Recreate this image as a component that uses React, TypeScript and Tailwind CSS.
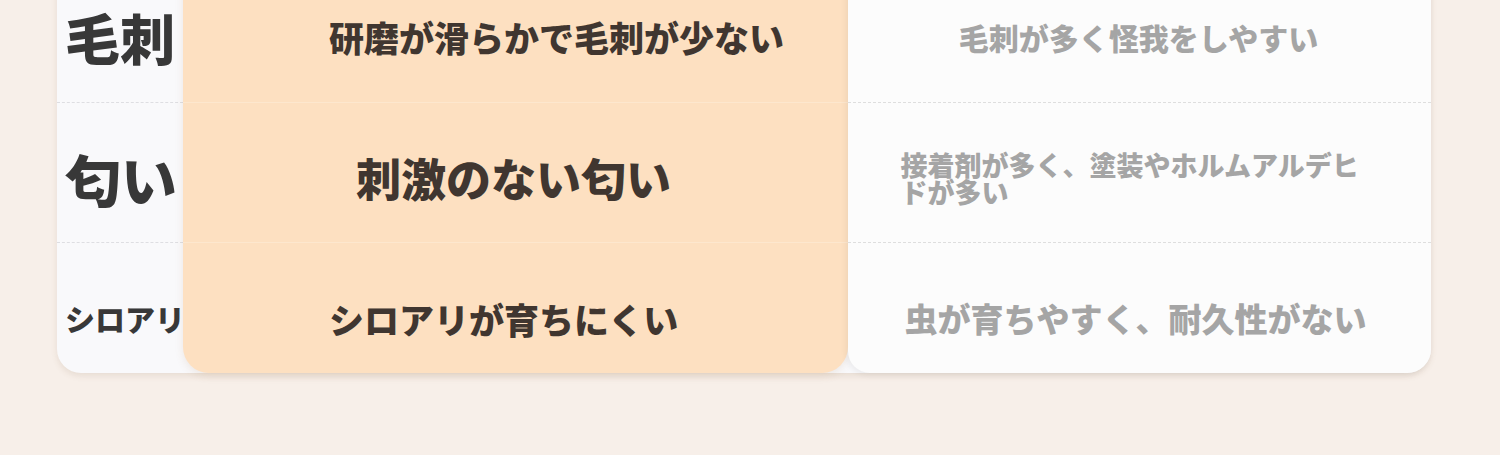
const FONT = { fontFamily: '"Noto Sans CJK JP", "Noto Sans", sans-serif' };

type Row = {
  label: string;
  labelSize: string;
  ours: string;
  oursClass: string;
  theirs: string;
  theirsClass: string;
  height: string;
  shift: string;
};

const ROWS: Row[] = [
  {
    label: "毛刺",
    labelSize: "text-[55px]",
    ours: "研磨が滑らかで毛刺が少ない",
    oursClass: "pl-[146px] text-[35px]",
    theirs: "毛刺が多く怪我をしやすい",
    theirsClass: "justify-center pr-[2px] text-[30px]",
    height: "h-[140px]",
    shift: "pt-[8px]",
  },
  {
    label: "匂い",
    labelSize: "text-[56px]",
    ours: "刺激のない匂い",
    oursClass: "pl-[173px] text-[45px]",
    theirs: "接着剤が多く、塗装やホルムアルデヒドが多い",
    theirsClass: "justify-center pr-[8px] text-[27px]",
    height: "h-[140px]",
    shift: "pt-[10px]",
  },
  {
    label: "シロアリ",
    labelSize: "text-[30px]",
    ours: "シロアリが育ちにくい",
    oursClass: "pl-[146px] text-[35px]",
    theirs: "虫が育ちやすく、耐久性がない",
    theirsClass: "justify-center pr-[8px] text-[33px]",
    height: "h-[130px]",
    shift: "pt-[20px]",
  },
];

export default function App() {
  return (
    <main className="min-h-screen w-full overflow-hidden bg-[#f7efe9] pl-[57px]" style={FONT}>
      <div className="-mt-[37px] flex w-[1374px] rounded-b-[24px] bg-[#f9f9fb] shadow-[0_3px_6px_rgba(120,90,60,0.12)]">
        {/* labels */}
        <div className="flex w-[126px] flex-col">
          {ROWS.map((r, i) => (
            <div
              key={r.label}
              className={`flex items-center whitespace-nowrap pl-[8px] ${r.height} ${r.shift} ${
                i < ROWS.length - 1 ? "border-b border-dashed border-[#dedee2]" : ""
              }`}
            >
              <span className={`font-black leading-none text-[#383838] ${r.labelSize}`}>{r.label}</span>
            </div>
          ))}
        </div>

        {/* our product */}
        <div className="relative z-10 flex w-[665px] flex-col rounded-b-[26px] bg-[#fde0c1] shadow-[0_3px_8px_rgba(160,110,60,0.12)]">
          {ROWS.map((r, i) => (
            <div
              key={r.ours}
              className={`flex items-center whitespace-nowrap ${r.height} ${r.shift} ${r.oursClass} ${
                i < ROWS.length - 1 ? "border-b border-[#fde7ce]" : ""
              }`}
            >
              <span className="font-black leading-none text-[#403630]">{r.ours}</span>
            </div>
          ))}
        </div>

        {/* others */}
        <div className="relative z-20 flex flex-1 flex-col rounded-bl-[22px] rounded-br-[24px] bg-[#fcfcfc] shadow-[-2px_2px_6px_rgba(0,0,0,0.06)]">
          {ROWS.map((r, i) => (
            <div
              key={r.theirs}
              className={`flex items-center ${r.height} ${r.shift} ${r.theirsClass} ${
                i < ROWS.length - 1 ? "border-b border-dashed border-[#dedede]" : ""
              }`}
            >
              {i === 1 ? (
                <p className="w-[470px] text-left font-black leading-[27px] text-[#a5a5a5]">{r.theirs}</p>
              ) : (
                <span className="whitespace-nowrap font-black leading-none text-[#a5a5a5]">{r.theirs}</span>
              )}
            </div>
          ))}
        </div>
      </div>
    </main>
  );
}
